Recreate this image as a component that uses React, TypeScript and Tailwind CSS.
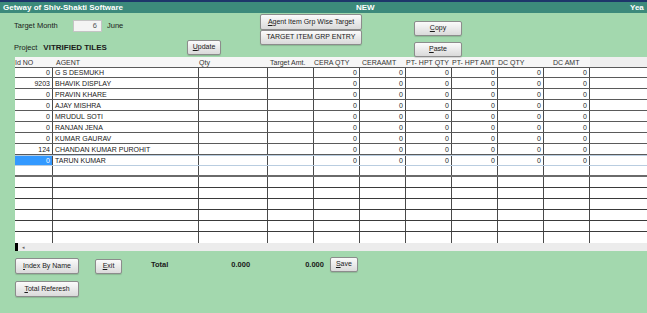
import React from "react";

const colW = ["w-[38px]", "w-[146px]", "w-[69px]", "w-[46px]", "w-[46px]", "w-[46px]", "w-[46px]", "w-[46px]", "w-[46px]", "w-[46px]"];

const headers = ["Id NO", "AGENT", "Qty", "Target Amt.", "CERA QTY", "CERAAMT", "PT- HPT QTY", "PT- HPT AMT", "DC QTY", "DC AMT"];

const rows: [string, string][] = [
  ["0", "G S DESMUKH"],
  ["9203", "BHAVIK DISPLAY"],
  ["0", "PRAVIN KHARE"],
  ["0", "AJAY MISHRA"],
  ["0", "MRUDUL SOTI"],
  ["0", "RANJAN JENA"],
  ["0", "KUMAR GAURAV"],
  ["124", "CHANDAN KUMAR PUROHIT"],
  ["0", "TARUN KUMAR"],
];

function Btn({ children, className = "" }: { children: React.ReactNode; className?: string }) {
  return (
    <div
      className={`flex items-center justify-center rounded-[2px] border border-[#8c8c8c] bg-gradient-to-b from-[#fbfbfb] to-[#dadada] text-[7px] text-[#1a1a1a] shadow-[0_1px_1px_rgba(0,0,0,0.15)] ${className}`}
    >
      {children}
    </div>
  );
}

export default function App() {
  return (
    <div
      className="w-[647px] h-[313px] overflow-hidden bg-[#a3d8ae] text-[#1a1a1a]"
      style={{ fontFamily: '"Liberation Sans", Arial, sans-serif' }}
    >
      {/* title bar */}
      <div className="h-[13px] border-t-[2px] border-[#1d356a] bg-[#3c8a7b] flex items-center text-white font-bold text-[8px] leading-none">
        <span className="pl-[3px] w-[356px]">Getway of Shiv-Shakti Software</span>
        <span className="w-[274px]">NEW</span>
        <span>Yea</span>
      </div>

      {/* form */}
      <div className="h-[44px] flex pl-[14px]">
        <div className="w-[246px] flex flex-col">
          <div className="mt-[7px] h-[12px] flex items-center text-[7.5px]">
            <span className="w-[59px]">Target Month</span>
            <div className="w-[29px] h-[12px] bg-[#f4f4f4] border border-[#c4c4c4] flex items-center justify-end pr-[4px] text-[#555]">6</div>
            <span className="ml-[5px]">June</span>
          </div>
          <div className="mt-[8px] h-[15px] flex items-center text-[7.5px]">
            <div className="w-[173px] flex items-center">
              <span>Project</span>
              <span className="ml-[6px] font-bold text-[8px]">VITRIFIED TILES</span>
            </div>
            <Btn className="w-[34px] h-[15px]"><span><u>U</u>pdate</span></Btn>
          </div>
        </div>
        <div className="w-[154px] flex flex-col pt-[1px]">
          <Btn className="w-[102px] h-[16px]"><span><u>A</u>gent Item Grp Wise Target</span></Btn>
          <Btn className="w-[102px] h-[15px]">TARGET ITEM GRP ENTRY</Btn>
        </div>
        <div className="flex flex-col pt-[8px] gap-[6px]">
          <Btn className="w-[48px] h-[16px]"><span><u>C</u>opy</span></Btn>
          <Btn className="w-[48px] h-[15px]"><span><u>P</u>aste</span></Btn>
        </div>
      </div>

      {/* grid */}
      <div className="ml-[15px] bg-white text-[7px] leading-none">
        <div className="h-[10px] flex bg-[#f6f6f6] text-[#333]">
          {headers.map((h, i) => (
            <div
              key={h}
              className={`${colW[i]} shrink-0 flex items-center ${i === 1 ? "pl-[3px]" : i === 9 ? "pl-[9px]" : i === 3 ? "pl-[2px]" : i === 5 ? "pl-[2px]" : ""}`}
            >
              {h}
            </div>
          ))}
          <div className="flex-1 bg-[#efefef]" />
        </div>
        {rows.map(([id, name], r) => {
          const sel = r === rows.length - 1;
          return (
            <div
              key={name}
              className={`h-[11px] flex border-b ${sel ? "border-[#b9cde0] border-t" : "border-[#5a5a5a]"} ${r === 0 ? "border-t border-t-[#5a5a5a]" : ""}`}
            >
              {colW.map((w, i) => (
                <div
                  key={i}
                  className={`${w} shrink-0 border-r border-[#4a4a4a] flex items-center ${
                    i === 1 ? "justify-start pl-[2px]" : "justify-end pr-[2px]"
                  } ${i === 0 && sel ? "bg-[#3399ff] text-white" : ""}`}
                >
                  {i === 0 ? id : i === 1 ? name : i >= 4 ? "0" : ""}
                </div>
              ))}
              <div className="flex-1" />
            </div>
          );
        })}
        {Array.from({ length: 7 }).map((_, r) => (
          <div
            key={r}
            className={`h-[11px] flex ${r < 6 ? "border-b border-[#3a3a3a]" : ""} ${r === 0 ? "border-b-[2px] border-b-[#6a6a6a]" : ""}`}
          >
            {colW.map((w, i) => (
              <div key={i} className={`${w} shrink-0 border-r border-[#4a4a4a]`} />
            ))}
            <div className="flex-1" />
          </div>
        ))}
        <div className="h-[8px] bg-[#ececec] flex items-center">
          <div className="w-[3px] h-[8px] bg-black" />
          <span className="ml-[4px] text-[5px] text-[#666]">◂</span>
        </div>
      </div>

      {/* footer */}
      <div className="pl-[15px] pt-[7px] flex flex-col">
        <div className="h-[16px] flex items-center text-[7.5px]">
          <Btn className="w-[64px] h-[16px]"><span><u>I</u>ndex By Name</span></Btn>
          <Btn className="ml-[16px] w-[27px] h-[15px]"><span><u>E</u>xit</span></Btn>
          <span className="ml-[29px] font-bold text-[7.5px] -mt-[3px]">Total</span>
          <span className="ml-[63px] font-bold text-[7.5px] -mt-[3px]">0.000</span>
          <span className="ml-[55px] font-bold text-[7.5px] -mt-[3px]">0.000</span>
          <Btn className="ml-[6px] w-[28px] h-[15px] -mt-[3px]"><span><u>S</u>ave</span></Btn>
        </div>
        <div className="mt-[7px]">
          <Btn className="w-[64px] h-[16px]"><span><u>T</u>otal Referesh</span></Btn>
        </div>
      </div>
    </div>
  );
}
